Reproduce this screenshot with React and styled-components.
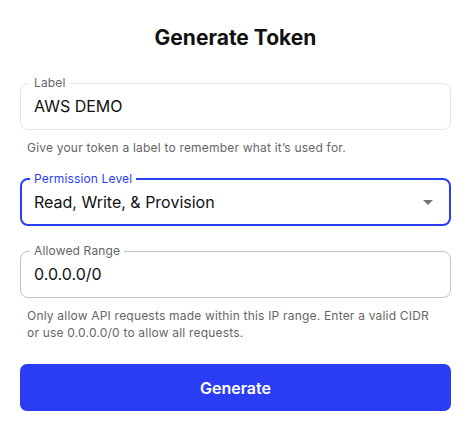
import React from "react";
import styled, { createGlobalStyle } from "styled-components";

const GlobalStyle = createGlobalStyle`
  html, body {
    margin: 0;
    padding: 0;
    background: #ffffff;
  }
  body {
    font-family: Inter, "Noto Sans", sans-serif;
    color: #111111;
  }
`;

const BLUE = "#2b3df4";

const Page = styled.div`
  width: 471px;
  box-sizing: border-box;
  padding: 25px 20px 0;
  display: flex;
  flex-direction: column;
`;

const Title = styled.h1`
  margin: 0 0 27px;
  font-size: 21px;
  line-height: 25px;
  font-weight: 700;
  text-align: center;
  color: #111111;
`;

const FieldGroup = styled.div`
  display: flex;
  flex-direction: column;
  margin-bottom: ${(p) => p.$gap}px;
`;

const Outline = styled.fieldset`
  margin: 0;
  padding: 0 ${(p) => (p.$focused ? 8 : 9)}px ${(p) => (p.$focused ? 5 : 6)}px;
  border: ${(p) => (p.$focused ? 2 : 1)}px solid ${(p) => p.$border};
  border-radius: 8px;
  min-width: 0;
`;

const Legend = styled.legend`
  padding: 0 4px;
  font-size: 12px;
  line-height: 12px;
  letter-spacing: 0.15px;
  color: ${(p) => p.$color};
`;

const Row = styled.div`
  display: flex;
  align-items: center;
  height: 34px;
  padding: 0 4px;
`;

const Value = styled.input`
  flex: 1;
  min-width: 0;
  height: 34px;
  padding: 0;
  border: none;
  outline: none;
  background: transparent;
  font-family: Inter, "Noto Sans", sans-serif;
  font-size: 16px;
  color: #111111;
`;

const SelectValue = styled.div`
  flex: 1;
  font-size: 16px;
  color: #111111;
`;

const Arrow = styled.svg`
  width: 24px;
  height: 24px;
  margin-right: -3px;
  fill: #757575;
`;

const Helper = styled.p`
  margin: 9px 0 0;
  padding: 0 7px;
  font-size: 12px;
  line-height: 17px;
  letter-spacing: 0.2px;
  color: #666666;
`;

const Button = styled.button`
  height: 47px;
  border: none;
  border-radius: 7px;
  background: ${BLUE};
  color: #ffffff;
  font-family: Inter, "Noto Sans", sans-serif;
  font-size: 16px;
  font-weight: 600;
  cursor: pointer;
`;

const App = () => {
  return (
    <>
      <GlobalStyle />
      <Page>
        <Title>Generate Token</Title>

        <FieldGroup $gap={17}>
          <Outline $border="#e6e6e6">
            <Legend $color="#666666">Label</Legend>
            <Row>
              <Value defaultValue="AWS DEMO" />
            </Row>
          </Outline>
          <Helper>Give your token a label to remember what it’s used for.</Helper>
        </FieldGroup>

        <FieldGroup $gap={19}>
          <Outline $border={BLUE} $focused>
            <Legend $color={BLUE}>Permission Level</Legend>
            <Row>
              <SelectValue>Read, Write, &amp; Provision</SelectValue>
              <Arrow viewBox="0 0 24 24">
                <path d="M7 10l5 5 5-5z" />
              </Arrow>
            </Row>
          </Outline>
        </FieldGroup>

        <FieldGroup $gap={23}>
          <Outline $border="#c4c4c4">
            <Legend $color="#666666">Allowed Range</Legend>
            <Row>
              <Value defaultValue="0.0.0.0/0" />
            </Row>
          </Outline>
          <Helper>
            Only allow API requests made within this IP range. Enter a valid CIDR
            <br />
            or use 0.0.0.0/0 to allow all requests.
          </Helper>
        </FieldGroup>

        <Button type="button">Generate</Button>
      </Page>
    </>
  );
};

export default App;
